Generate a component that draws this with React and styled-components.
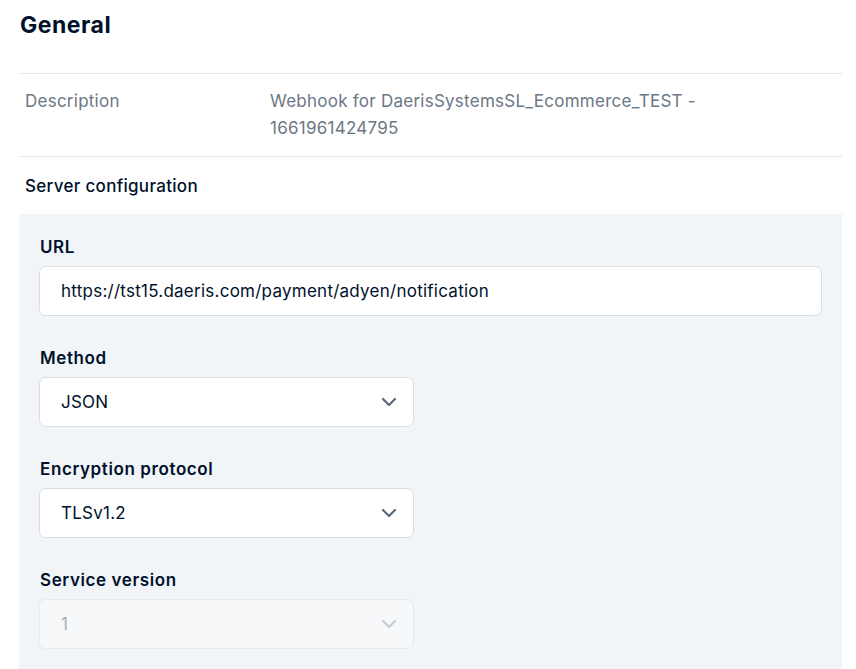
import React from "react"
import styled, { createGlobalStyle } from 'styled-components';

const GlobalStyle = createGlobalStyle`
  body {
    margin: 0;
    background: #ffffff;
    font-family: Inter, "Noto Sans", sans-serif;
    color: #00112c;
  }
`

const Page = styled.div`
  padding: 0 14px 0 19px;
`

const Title = styled.h2`
  margin: 0;
  padding: 11px 1px 0;
  height: 74px;
  box-sizing: border-box;
  font-size: 23px;
  line-height: 28px;
  font-weight: 700;
  letter-spacing: 0.5px;
  border-bottom: 1px solid #e3e6ea;
`

const InfoRow = styled.div`
  display: grid;
  grid-template-columns: 245px 1fr;
  padding: 14px 6px 14px;
  font-size: 17px;
  letter-spacing: 0.25px;
  line-height: 27px;
  color: #6b7785;
  border-bottom: 1px solid #e3e6ea;
`

const SubTitle = styled.div`
  padding: 17px 6px 16px;
  font-size: 17px;
  letter-spacing: 0.3px;
  line-height: 24px;
  font-weight: 500;
`

const Panel = styled.div`
  background: #f2f5f8;
  padding: 23px 20px 20px;
  min-height: 456px;
  box-sizing: border-box;
`

const Field = styled.div`
  margin-bottom: 32px;
`

const Label = styled.div`
  font-size: 17px;
  line-height: 20px;
  font-weight: 600;
  letter-spacing: 0.6px;
  margin-bottom: 9px;
  padding-left: 1px;
`

const Box = styled.div`
  display: flex;
  align-items: center;
  justify-content: space-between;
  box-sizing: border-box;
  height: 50px;
  width: ${p => (p.$wide ? '100%' : '375px')};
  padding: 0 16px 0 21px;
  background: ${p => (p.$disabled ? '#f7f8fa' : '#ffffff')};
  border: 1px solid ${p => (p.$disabled ? '#e6e9ed' : '#dbdfe4')};
  border-radius: 7px;
  font-size: 17px;
  letter-spacing: 0.25px;
  color: ${p => (p.$disabled ? '#a6adb6' : '#00112c')};
`

const Chevron = ({ faded }) => (
  <svg width="16" height="10" viewBox="0 0 16 10" fill="none">
    <path d="M2 2L8 8L14 2" stroke={faded ? '#c7ccd3' : '#5c6878'} strokeWidth="2.2" strokeLinecap="round" strokeLinejoin="round" />
  </svg>
)

function Select({ value, disabled }) {
  return (
    <Box $disabled={disabled}>
      <span>{value}</span>
      <Chevron faded={disabled} />
    </Box>
  )
}

export default function App() {
  return (
    <Page>
      <GlobalStyle />
      <Title>General</Title>
      <InfoRow>
        <span>Description</span>
        <span>Webhook for DaerisSystemsSL_Ecommerce_TEST -<br />1661961424795</span>
      </InfoRow>
      <SubTitle>Server configuration</SubTitle>
      <Panel>
        <Field>
          <Label>URL</Label>
          <Box $wide>https://tst15.daeris.com/payment/adyen/notification</Box>
        </Field>
        <Field>
          <Label>Method</Label>
          <Select value="JSON" />
        </Field>
        <Field>
          <Label>Encryption protocol</Label>
          <Select value="TLSv1.2" />
        </Field>
        <Field>
          <Label>Service version</Label>
          <Select value="1" disabled />
        </Field>
      </Panel>
    </Page>
  )
}
